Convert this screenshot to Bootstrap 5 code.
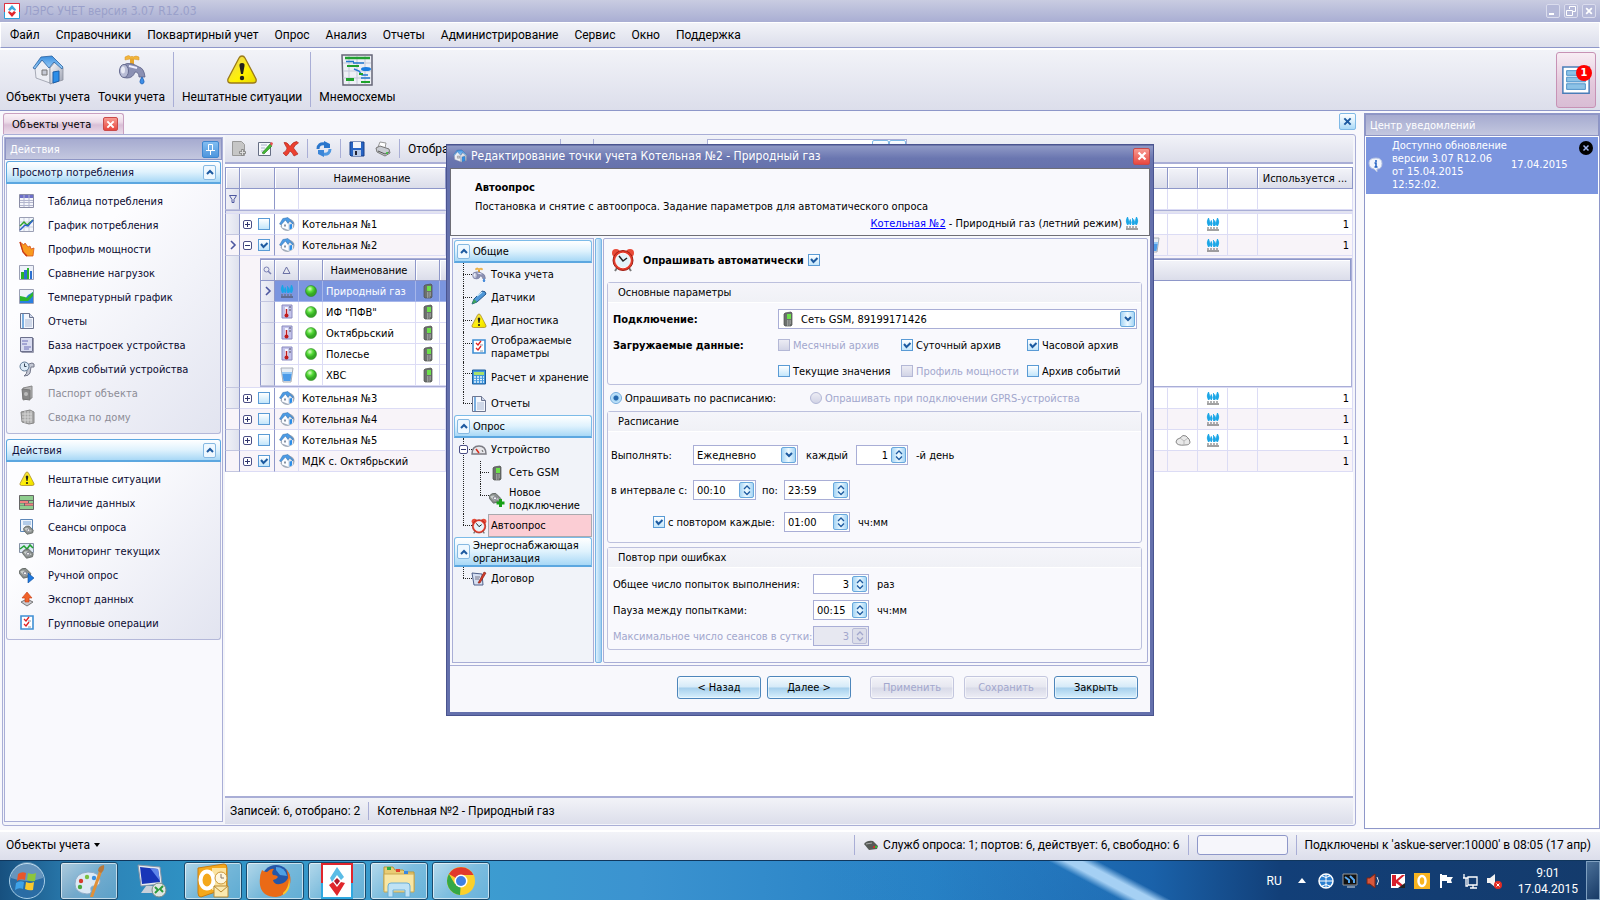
<!DOCTYPE html>
<html lang="ru">
<head>
<meta charset="utf-8">
<meta name="viewport" content="width=device-width, initial-scale=1">
<title>ЛЭРС УЧЕТ версия 3.07 R12.03</title>
<link rel="stylesheet" href="https://cdn.jsdelivr.net/npm/bootstrap@5.3.0/dist/css/bootstrap.min.css">
<script defer src="https://cdn.jsdelivr.net/npm/bootstrap@5.3.0/dist/js/bootstrap.bundle.min.js"></script>
<style>
:root{--ui:Roboto,"Open Sans",sans-serif;--tah:"DejaVu Sans Condensed","DejaVu Sans",sans-serif;--line:#a9aed6;--deep:#8e97c9;--panel:linear-gradient(#f2f3f8,#dcdeeb);--blue:linear-gradient(#fdfeff,#d9effc 50%,#a9d9f7)}
body{font:11px/13px var(--tah);color:#000;background:#f8f8fc;overflow:hidden}
svg{flex:none;display:block}
button,input,select{font:inherit;color:inherit}
button{border:0;background:none;padding:0}
.i16{width:16px;height:16px}.i32{width:32px;height:32px}
.ui{font:12px/16px var(--ui)}
.app-title{height:22px;background:linear-gradient(#c9cce1,#a9aed3);color:#9aa0ca;font-size:12px}
.win-btn{width:14px;height:14px;border:1px solid #dadced;border-radius:2px;background:#b5b9d8;display:flex}
.menu-bar{height:26px;background:var(--panel);border:1px solid #fff;border-bottom:1px solid var(--deep);padding:0 9px;gap:16px}
.menu-bar a{color:#000;text-decoration:none}
.main-tools{height:63px;background:var(--panel);border-top:2px solid #fff;border-bottom:1px solid var(--deep);padding:2px 4px 3px 6px}
.big-btn{display:flex;flex-direction:column;align-items:center;gap:3px}
.vsep{width:1px;align-self:stretch;background:var(--line)}
.note-btn{width:40px;height:56px;border:1px solid #c792b5;border-radius:3px;background:linear-gradient(#f8edf4,#e4c9dc 55%,#d9bdd5);display:flex;position:relative}
.note-count{position:absolute;left:19px;top:12px;width:16px;height:16px;border-radius:50%;background:#f00;color:#fff;font:bold 11px/16px var(--tah);text-align:center}
.workspace{padding-left:2px}
.tab-strip{height:23px;padding-left:1px}
.doc-tab{height:21px;width:121px;border:1px solid #c9a0c0;border-bottom:0;border-radius:3px 3px 0 0;background:linear-gradient(#faf3f8,#ecdbe8 40%,#d9bfd6 55%,#ecdcea);padding:0 5px 0 8px}
.x-red{width:15px;height:14px;border:1px solid #c94a4a;border-radius:2px;background:linear-gradient(#f79a90,#e8473f);display:flex}
.x-red.big{width:17px;height:17px}
.x-blue{width:17px;height:17px;border:1px solid #7fb9e6;border-radius:2px;background:var(--blue);display:flex;color:#1d5aa0}
.doc-frame{border:1px solid var(--line);border-radius:3px;padding:0 2px 1px 1px;background:#f4f5fa}
.side{width:219px;flex:none;border:1px solid var(--line);background:#f9f9fd;margin:2px 0}
.side-groups{display:flex;flex-direction:column;gap:5px;padding:1px}
.pane-title{height:22px;background:linear-gradient(#a6abd0,#c3c7df);border:1px solid #8e95c4;color:#fff;padding:0 2px 0 4px}
.pin{width:17px;height:17px;border:1px solid #3f86cf;border-radius:2px;background:linear-gradient(#82bdf1,#4f96dd);display:flex}
.grp-head{height:23px;border:1px solid #5ca7e0;border-bottom:2px solid #5ca7e0;border-radius:3px 3px 0 0;background:linear-gradient(#fff,#dff2fd 50%,#a8d8f6);padding:0 4px 0 5px;width:100%;color:#10103c}
.fold{width:13px;height:15px;border:1px solid #86b9e2;border-radius:2px;background:#eef8ff;display:flex;flex:none}
.grp-body{border:1px solid #b4b8d9;border-top:0;border-radius:0 0 3px 3px;background:linear-gradient(135deg,#fdfdff 30%,#e2e4f0);padding:5px 12px 4px}
.grp-body a{display:flex;align-items:center;height:24px;gap:13px;color:#0a0a30;text-decoration:none;white-space:nowrap}
.grp-body a.off{color:#8c8c96}
.doc-main{margin-left:2px}
.grid-tools{height:29px;background:var(--panel);border-bottom:2px solid var(--line);padding:0 6px}
.next-tool{margin-left:10px}
.tool-text{width:144px}
.filter-box{width:200px;height:20px;border:1px solid var(--line);background:#fff;margin-left:105px}
.grid-pane{padding-top:3px}
.xgrid{border-collapse:separate;border-spacing:0;table-layout:fixed;width:100%;line-height:13px}
.xgrid th{font-weight:400;text-align:center;background:linear-gradient(#f3f4f9,#dbddea);border:1px solid var(--deep);border-left:0;height:22px;padding:0;box-shadow:inset 1px 1px #fff}
.xgrid tr>:first-child{border-left:1px solid var(--deep)}
.xgrid td{height:21px;padding:0 3px;border-right:1px solid #dcdcf5;border-bottom:1px solid #dcdcf5;white-space:nowrap;overflow:hidden;background:#fff}
.xgrid td svg{margin:0 auto}
.xgrid tr.alt>td{background:#f8f4f9}
.xgrid td.ind{background:linear-gradient(90deg,#f0f1f7,#dfe1ee);border-right:1px solid var(--deep);border-bottom:1px solid #c3c6e0;padding:0}
.xgrid td.dk{border-right-color:var(--deep)}
.xgrid td.strip{height:4px;background:#e2e3f0;border-top:1px solid var(--line)}
.xgrid tr.picked>td:not(.ind,.void){background:#7b95df;color:#fff;border-color:#a6b6ea}
.xgrid td.void{border:0}
.pick{gap:6px}
.pm{width:9px;height:9px;border:1px solid #4b4f86;border-radius:2px;background:#fff;position:relative;flex:none}
.pm::before,.pm.plus::after{content:"";position:absolute;background:#30346c}
.pm::before{left:1px;right:1px;top:3px;height:1px}
.pm.plus::after{top:1px;bottom:1px;left:3px;width:1px}
.xgrid td.nest{padding:2px 0 0 20px;background:#f8f4f9}
.nest-wrap{border:1px solid var(--line);border-left:0;background:#fff}
.doc-status{height:28px;background:var(--panel);border-top:2px solid var(--line);font:12px/16px var(--ui);padding:0 5px}
.alerts{width:236px;flex:none;border:1px solid var(--deep);background:#fff;margin:2px 0 1px}
.alert-row{background:#7b95df;color:#fff;height:57px;margin:1px;padding:0 5px 2px 2px}
.alert-row p{width:111px;margin:0;white-space:nowrap}
.status{height:30px;background:var(--panel);border-top:2px solid #fff;padding:3px 9px 5px 6px}
.progress-slot{width:91px;height:20px;border:1px solid var(--deep);border-radius:3px;background:#f6f6fb}
/* dialog */
.stage{position:absolute;inset:0;display:flex;align-items:center;justify-content:center;pointer-events:none}
.dlg{pointer-events:auto;width:708px;background:#f8f8fc;border:4px solid #6470ac;border-top:0;outline:1px solid #4a548f;outline-offset:-1px}
.dlg-title{height:24px;margin:0 -4px;padding:0 4px 0 7px;background:linear-gradient(#4a548f 1px,#8f99c6 2px,#6a76b0 60%,#6672ac);color:#fff;font-size:12px}
.dlg-head{height:68px;border:1px solid #6e6e76;background:#f9f9fd;padding:12px 9px 0 24px}
.dlg-note{margin:6px 0 2px}
.dlg-link{display:flex;justify-content:flex-end;align-items:center;gap:2px}
.dlg-link a{color:#00f}
.dlg-body{display:flex;height:430px;padding:2px;border-bottom:1px solid var(--line)}
.dlg-foot{height:46px;padding:0 12px 4px 0}
.tree{width:142px;flex:none;border:1px solid var(--line);background:#f1f3f9;padding:1px}
.tree-head{min-height:23px;width:100%;display:flex;align-items:center;gap:3px;text-align:left;border:1px solid #7cbbe8;border-bottom:2px solid #5ca7e0;border-radius:3px 3px 0 0;background:linear-gradient(#fff,#dff2fd 50%,#a8d8f6);padding:0 3px 0 2px;line-height:13px}
.tree ul{list-style:none;margin:0;padding:0 0 0 17px}
.tree li{position:relative}
.tree li>.nd{display:flex;align-items:center;min-height:23px;gap:4px}
.tree li>.nd.tall,.tree-head.tall{min-height:30px}
.tree li::before{content:"";position:absolute;left:-8px;top:0;bottom:0;border-left:1px dotted #222}
.tree li::after{content:"";position:absolute;left:-8px;width:9px;top:11px;border-top:1px dotted #222}
.tree li:last-child::before{bottom:auto;height:11px}
.tree li li::after,.tree li li::before{left:-9px}
.tree ul ul{padding-left:18px}
.tree .cur{flex:1;background:#fbcdd4;border:1px solid #a9a9ae;height:23px;display:flex;align-items:center;margin-left:-3px;padding-left:2px}
.tree .box-pm{position:absolute;left:-12px;top:7px;z-index:1}
.split{width:7px;border:1px solid #79b5e4;border-radius:2px;background:linear-gradient(90deg,#dff1fd,#9dcdf0);margin:0 1px}
.work{border:1px solid var(--line);border-radius:2px;padding:3px 5px 0 3px}
.auto-row{height:36px;margin-bottom:4px}
.mode-row{height:18px;margin-bottom:4px;padding-left:3px}
.fs{border:1px solid #bcc0dd;border-radius:3px;margin:0 0 4px;background:#f9f9fd}
.fs h3{font:11px/20px var(--tah);height:20px;margin:0 0 3px;padding-left:10px;background:linear-gradient(#f5f5fa,#f0f1f6);border-bottom:1px solid #fff}
.fs.plan h3{margin-bottom:1px}
.fs>div{display:flex;align-items:center;height:26px;padding-left:5px}
.fs.three{height:103px}
.fs.plan{height:132px}
.fs.plan>div{padding-left:3px}
.fs.plan>.first{height:44px}
.fs.plan>.last{height:38px;padding-left:45px}
.w-cap{width:82px;flex:none}.w-long{width:200px;flex:none}.w-key{width:165px;flex:none}.w-o1{width:123px}.w-o2{width:126px}.w-per{width:105px}.w-s{width:56px}.w-m{width:66px}.w-rep{width:131px}
.chk{appearance:none;width:12px;height:12px;margin:0;flex:none;border:1px solid #5a9bd5;background:linear-gradient(#fff,#c3e6fb)}
.chk:checked{background:url("data:image/svg+xml,%3Csvg xmlns='http://www.w3.org/2000/svg' viewBox='0 0 10 10'%3E%3Cpath d='M2 4l2.5 3L8.500 3' fill='none' stroke='%231d5aa0' stroke-width='2'/%3E%3C/svg%3E"),linear-gradient(#fff,#c3e6fb)}
.chk:disabled{border-color:#b4b8d6;background:linear-gradient(#ececf4,#d2d4e6)}
.rad{border-radius:50%;border-color:#6fa9dc}
.rad:checked{background:radial-gradient(circle,#2467ad 0 2px,#a8d6f5 3px,#eef8ff)}
label.opt{display:flex;align-items:center;gap:3px;flex:none;white-space:nowrap}
label.opt.off,.dis{color:#a2a7cd}
.spin,.combo{display:flex;align-items:center;height:20px;border:1px solid var(--line);background:#fff;padding:1px}
.spin input{flex:1;min-width:0;width:20px;border:0;padding:0 3px 0 2px;background:none;outline:0}
.spin button,.combo .dd{width:15px;height:16px;border:1px solid #69a8dc;border-radius:2px;background:linear-gradient(90deg,#a6d5f5,#eefaff 50%,#a6d5f5);display:flex;flex:none;color:#1d5aa0}
.spin svg,.dd svg,.x-red svg,.x-blue svg,.fold svg,.pin svg,.win-btn svg{margin:auto}
.combo select{appearance:none;border:0;background:none;flex:1;min-width:0;padding:0 2px;outline:0}
.combo svg+select{padding-left:5px}
.combo .dd{pointer-events:none}
.spin.dis{background:#e7e8f1}
.spin.dis button{background:#dcdeea;border-color:#b9bcd8;color:#a2a7cd}
.dbtn{width:84px;height:23px;border:1px solid #4d86bb;border-radius:3px;background:linear-gradient(#f4fafe,#d5eaf8 48%,#a5cfec 52%,#d8f0fd);box-shadow:inset 0 0 0 1px #ffffff80}
.dbtn:disabled{border-color:#c3c6de;background:linear-gradient(#f3f3f8,#e6e7f0 48%,#d8dae8 52%,#ededf5);color:#a2a7cd}
/* taskbar */
.taskbar{height:40px;border-top:1px solid #10365c;background:linear-gradient(28deg,#0000 50%,#2f8ad040 67%,#a5d0f4 68%,#a5d0f4 69%,#0000 70%),linear-gradient(90deg,#17507f 0,#2c80b4 5%,#2f92c4 12%,#3d9ed0 28%,#3b93d0 40%,#2680c4 58%,#1a62aa 72%,#123f78 80%,#143b6c);color:#fff;font:12px/16px var(--ui)}
.tb{width:58px;height:38px;display:flex;border-radius:3px;border:1px solid #1a4a6c;box-shadow:inset 0 0 0 1px #ffffff99;background:linear-gradient(135deg,#ffffffa0,#ffffff55 50%,#ffffff38)}
.tb svg,.tb-rdp svg{margin:auto}
.tb-rdp{width:66px}
.start{width:60px;padding-left:8px}
.show-desk{width:14px;border:1px solid #7fa0c0;background:linear-gradient(135deg,#4b7098,#173a66)}
</style>
</head>
<body class="d-flex flex-column min-vh-100">
<svg width="0" height="0" class="position-absolute" aria-hidden="true">
<defs>
<linearGradient id="gs" x1="0" y1="0" x2="1" y2="1"><stop offset="0" stop-color="#fdfdff"/><stop offset="1" stop-color="#9a9fb0"/></linearGradient>
<linearGradient id="gy" x1="0" y1="0" x2="1" y2="1"><stop offset="0" stop-color="#e8cf70"/><stop offset=".6" stop-color="#fff200"/><stop offset="1" stop-color="#e8d800"/></linearGradient>
<linearGradient id="gb" x1="0" y1="0" x2="0" y2="1"><stop offset="0" stop-color="#3a8fe0"/><stop offset="1" stop-color="#9fd0f8"/></linearGradient>
<radialGradient id="gg" cx=".4" cy=".3"><stop offset="0" stop-color="#e0ffc8"/><stop offset=".55" stop-color="#55dc38"/><stop offset="1" stop-color="#35a824"/></radialGradient>
<symbol id="house" viewBox="0 0 32 32"><path d="M3 14l8-9 7 8v16l-14-5z" fill="#eceef4" stroke="#9599a6" stroke-width=".8"/><path d="M18 14l5-6 8 6v12l-13 4z" fill="url(#gs)" stroke="#8b8f9c" stroke-width=".8"/><path d="M1 14L9 3l11-1 11 11-1 2-8-7-5 6-7-8-7 9z" fill="url(#gb)" stroke="#27609f" stroke-width=".8"/><path d="M21 18l6-1v10l-6 2z" fill="#2c8ee8" stroke="#1a5faa"/><path d="M10 16h5v5h-5z" fill="#c5c9d4" stroke="#777"/></symbol>
<symbol id="sm-house" viewBox="0 0 16 16"><path d="M10 2.500q5.500 1.500 5.500 6T9 15Q4 15 1.500 10.500L3 6z" fill="#a3acba"/><path d="M3 7.500L6.500 4l3 3.500V14L3 11.500z" fill="#fbfcff"/><path d="M9 7l2-2.500 3 3.500v4.500L9 14z" fill="#dfe4ec"/><path d="M.5 8l3.300-5.500L9 1.500 14.500 7l-.8 1-3-3L9 7.500 6.500 4 2 8.800z" fill="#4c9be4" stroke="#27609f" stroke-width=".4"/><path d="M10.500 8.500l2.500-.5v4.500l-2.500 1z" fill="#2c8ee8"/><path d="M5 8.500h2v2H5z" fill="#8a94a4"/></symbol>
<symbol id="tap" viewBox="0 0 32 32"><path d="M9 3q4-3 6 0 1-2 2 0 3-2 6 0v3l-6-1h-3l-5 1z" fill="#f2b53c" stroke="#d6942a" stroke-width=".5"/><path d="M14 5h4v6h-4z" fill="#e7a62c"/><path d="M5 12q6-4 12-2l6 3q5 1 6 10h-6q0-5-4-5-2 6-8 6-6 0-7-6z" fill="#8b90b3" stroke="#5a5f85" stroke-width=".8"/><ellipse cx="8" cy="17" rx="4.500" ry="6.500" fill="#b9bdd6" stroke="#666b90"/><ellipse cx="7" cy="16" rx="2" ry="3.500" fill="#e9ebf6"/><path d="M13 12l8 2" stroke="#eef" stroke-width="2"/><path d="M26 23q-4 6 0 7 4-1 0-7" fill="#3e8fe8" stroke="#2a6dc0"/></symbol>
<symbol id="warn" viewBox="0 0 32 32"><path d="M16 2q2 0 3 2l11 21q1 4-3 4H5q-4 0-3-4L13 4q1-2 3-2z" fill="url(#gy)" stroke="#9a7a18" stroke-width="1.300"/><path d="M16 9q3 0 2.500 3L17 20h-2l-1.500-8Q13 9 16 9z" fill="#20201c"/><circle cx="16" cy="24" r="2.200" fill="#20201c"/></symbol>
<symbol id="mnemo" viewBox="0 0 32 32"><path d="M1 1h30v30H2z" fill="#eef0f6" stroke="#667" stroke-width="1.500"/><path d="M8 2v28M16 2v28M24 2v28M2 9h28M2 17h28M2 24h28" stroke="#c3c8d8"/><path d="M4 4h25" stroke="#20a030" stroke-width="2.500"/><path d="M5 7.500h8M12 9h11" stroke="#2478d0" stroke-width="1.500"/><path d="M6 12h12" stroke="#20a030" stroke-width="2"/><path d="M13 15l5 2 3 4h6" stroke="#2478d0" stroke-width="1.500" fill="none"/><ellipse cx="25" cy="15" rx="5" ry="2" fill="#1b7de0"/><path d="M5 24h8v3H5zM18 19h4v2h-4zM20 27h9v2h-9z" fill="#1ea32c"/><path d="M20 24h9" stroke="#2478d0" stroke-width="1.500"/></symbol>
<symbol id="news" viewBox="0 0 32 32"><path d="M2 2h28v28H2z" fill="#fff" stroke="#4a7db8" stroke-width="1.600"/><path d="M6 6h20v5H6zM6 13h20v5H6zM6 20h20v6H6z" fill="#8cc2e6" stroke="#4a8fc8"/></symbol>
<symbol id="lers" viewBox="0 0 16 16"><path d="M.5.5h15v15H.5z" fill="#fff" stroke="#2a9fd8"/><path d="M.5 9V.5h15V9" fill="none" stroke="#e03040"/><path d="M8 2l4 4.500-1 1.500-3-2-2 2-2-1.500z" fill="#3cabe0"/><path d="M8 14L4 9.500 5 8l3 2 2-2 2 1.500z" fill="#e0272b"/></symbol>
<symbol id="table" viewBox="0 0 16 16"><path d="M.5 1.500h14v13H.5z" fill="#f4f5fa" stroke="#8a8da6"/><path d="M1 2h13v3H1z" fill="#6d6fc8"/><path d="M1 7.500h13M1 9.500h13M1 12.500h13M5 2v12M10 2v12" stroke="#b3b6ce"/></symbol>
<symbol id="chart" viewBox="0 0 16 16"><path d="M.5.5h14v14H.5z" fill="#f3f6fb" stroke="#9a9fb4"/><path d="M5 1v13M10 1v13M1 5h13M1 10h13" stroke="#c9cede"/><path d="M1 9l4-4 3 3 6-5" fill="none" stroke="#2fa32a" stroke-width="1.500"/><path d="M1 13l5-5 3 1 5-6" fill="none" stroke="#2b5fc9" stroke-width="1.500"/></symbol>
<symbol id="power" viewBox="0 0 16 16"><path d="M1 1l4 3 1-2 3 4 2-1 1 3 3-1-1 8H7L4 11z" fill="#f99a1e" stroke="#d8561a" stroke-width=".8"/><path d="M1 1l3 10 4 4" stroke="#c83a18" fill="none" stroke-width="1.300"/></symbol>
<symbol id="bars" viewBox="0 0 16 16"><path d="M.5.5h14v14H.5z" fill="#eef2fa" stroke="#9a9fb4"/><path d="M2 7h3v7H2zM8 3h2v11H8z" fill="#28b428"/><path d="M5 5h3v9H5zM11 6h2v8h-2z" fill="#2b6fd0"/></symbol>
<symbol id="temp" viewBox="0 0 16 16"><path d="M.5.5h14v14H.5z" fill="#eef2fa" stroke="#9a9fb4"/><path d="M1 9l4 2 4-5 5-3v11H1z" fill="#2b7fe0"/><path d="M1 7l5 1 2 1 6-6v4l-5 5H1z" fill="#2cb52c"/></symbol>
<symbol id="report" viewBox="0 0 16 16"><path d="M1.500.5h9l4 4v11h-13z" fill="#f3f6fc" stroke="#6c7590"/><path d="M10.500.5v4h4" fill="#cdd6ea" stroke="#6c7590"/><path d="M4 1v14" stroke="#7aaee0" stroke-width="2"/><path d="M6 7h7M6 9h7M6 11h7M6 13h7" stroke="#a9b8d4"/></symbol>
<symbol id="base" viewBox="0 0 16 16"><path d="M1.500.5h12v14h-12z" fill="#d9dcf0" stroke="#6c708c"/><path d="M3 4h6M3 7h5M5 10h7M5 12h5" stroke="#6d6fb8"/><path d="M14.500 1v14.500h-12" stroke="#9a9cae" fill="none"/></symbol>
<symbol id="archive" viewBox="0 0 16 16"><path d="M7 4l6-2q3 0 2 4h-3l-1 6q-1 3-6 3 3-2 3-5z" fill="#c4c8d4" stroke="#74788a"/><circle cx="5.500" cy="5.500" r="4.500" fill="#dbeaf6" stroke="#5d7893"/><path d="M5.500 2.500v3h2" stroke="#345" fill="none"/></symbol>
<symbol id="passport" viewBox="0 0 16 16"><path d="M4 3l9-2v12l-9 2z" fill="#b5b5b5" stroke="#888"/><path d="M3 4l8 1v10l-7-1z" fill="#888" stroke="#777"/><circle cx="7" cy="9" r="2" fill="#bbb"/></symbol>
<symbol id="homes" viewBox="0 0 16 16"><path d="M2 3l9-2 4 2v11l-5 1-7-2z" fill="#a6a6a6" stroke="#888"/><path d="M3 5h10M3 8h10M3 11h10M6 2v12M9 2v12M12 2v12" stroke="#d5d5d5"/></symbol>
<symbol id="avail" viewBox="0 0 16 16"><path d="M.5.5h14v14H.5z" fill="#666" stroke="#666"/><path d="M1 1h13v4H1zM1 11h13v3H1z" fill="#8fce8f"/><path d="M1 6h8v2H1zM6 8.500h8v2H6z" fill="#f08080"/><path d="M10 6h4v2h-4zM1 8.500h4v2H1z" fill="#8fce8f"/></symbol>
<symbol id="phone" viewBox="0 0 16 16"><path d="M1 6q3-4 8-3l6 6-1 4-8 2-5-6z" fill="#8b908e" stroke="#555b58"/><path d="M2 7q4-3 7 0l4 3-6 2z" fill="#c8cdca"/><circle cx="8" cy="9" r="2" fill="#f2f4f2" stroke="#667"/></symbol>
<symbol id="sess" viewBox="0 0 16 16"><path d="M1.500.5h12v12h-12z" fill="#eef4fc" stroke="#5d87b9"/><path d="M4 3h8M4 5h8" stroke="#79a4d6"/><use href="#phone" x="3" y="5" width="13" height="11"/></symbol>
<symbol id="mon" viewBox="0 0 16 16"><path d="M.5.5h14v9H.5z" fill="#dce8f5" stroke="#8490a4"/><path d="M1 6l4-3 3 3 3-4 3 3" stroke="#20a030" fill="none" stroke-width="1.500"/><use href="#phone" x="2" y="4" width="14" height="12"/></symbol>
<symbol id="play" viewBox="0 0 16 16"><use href="#phone" x="-1" y="-1" width="14" height="13"/><path d="M9 6l6 5-6 5z" fill="#1c78e0" stroke="#0f4b98" stroke-width=".6"/></symbol>
<symbol id="export" viewBox="0 0 16 16"><path d="M2 11l6-3 6 3-6 4z" fill="#c9c9cf" stroke="#777"/><path d="M8 1l5 6H10v4H6V7H3z" fill="#f0622a" stroke="#c43c14" stroke-width=".6"/></symbol>
<symbol id="ops" viewBox="0 0 16 16"><path d="M2 1h12v13H2z" fill="#fff" stroke="#3f8fd4" stroke-width="1.600"/><path d="M5 4l2 2 3-4M5 9l2 2 3-4" stroke="#e02020" fill="none" stroke-width="1.300"/><path d="M9 6h3M9 12h3" stroke="#89a"/></symbol>
<symbol id="addoc" viewBox="0 0 16 16"><path d="M1.500.5h9l3 3v11h-12z" fill="#c6c6c6" stroke="#999"/><path d="M11.500 8v7M8 11.500h7" stroke="#888" stroke-width="2.500"/><path d="M11.500 9v5M9 11.500h5" stroke="#ddd"/></symbol>
<symbol id="edit" viewBox="0 0 16 16"><path d="M1.500 1.500h12v13h-12z" fill="#f6f8fc" stroke="#666e84"/><path d="M4 4h6M4 7h4M4 10h3" stroke="#a9b4cc"/><path d="M5 12l8-9 2 2-8 8z" fill="#42b833" stroke="#237a1a" stroke-width=".6"/><path d="M13 3l1-2 2 1-1 3z" fill="#e85050"/></symbol>
<symbol id="del" viewBox="0 0 16 16"><path d="M1 1.500q3-1 6 4 3-5 7-5l1.500 1.500q-4 2-5 5 3 4 4.500 6l-4 2q-2-4-4-5-2 4-4 5l-3-3q4-2 4-5-2-3-3-5.500z" fill="#ec4030" stroke="#a81c12" stroke-width=".6"/></symbol>
<symbol id="refresh" viewBox="0 0 16 16"><path d="M2 8q0-6 7-5" fill="none" stroke="#2a76cc" stroke-width="3"/><path d="M8 0l6 3v4H8z" fill="#2a76cc"/><path d="M14 8q0 6-7 5" fill="none" stroke="#4e98e2" stroke-width="3"/><path d="M8 16l-6-3V9h6z" fill="#3c86d8"/></symbol>
<symbol id="save" viewBox="0 0 16 16"><path d="M1 1h14v14H2l-1-1z" fill="#2764c4" stroke="#183f88"/><path d="M4 1h8v6H4z" fill="#f3f5fa"/><path d="M4 9h8v6H4z" fill="#b6c9e8"/><path d="M6 10h2v4H6z" fill="#223"/></symbol>
<symbol id="print" viewBox="0 0 16 16"><path d="M3 6l2-5 6 1-1 5z" fill="#fff" stroke="#999"/><path d="M1 7l4-2 9 3 1 4-5 3-8-4z" fill="#c9ccd2" stroke="#777"/><path d="M3 10l7 3 4-2" stroke="#555" fill="none"/><circle cx="12" cy="12" r="1" fill="#3c3"/></symbol>
<symbol id="gas" viewBox="0 0 16 16"><path d="M3.500 2q-2.500 4 0 8 2.500-1 1-4.500zM6.300 4.500q-1.800 3 0 5.500 1.800-2 0-5.500zM8.500 3v7M9.700 4.500q-1.800 3 0 5.500 1.800-2 0-5.500zM12.500 2q2.500 4 0 8-2.500-1-1-4.500z" fill="#1ba6e6" stroke="#1ba6e6" stroke-width=".9"/><path d="M2 12h12" stroke="#666" stroke-dasharray="2 1"/><path d="M2 14h12" stroke="#444"/></symbol>
<symbol id="ball" viewBox="0 0 16 16"><circle cx="8" cy="8" r="5.500" fill="url(#gg)" stroke="#237a1a" stroke-width=".5"/></symbol>
<symbol id="heat" viewBox="0 0 16 16"><path d="M3 1h10v13H3z" fill="#c3c3ea" stroke="#8a8ac0"/><path d="M7.500 3v8" stroke="#f5f5ff" stroke-width="3"/><path d="M7.500 5v6" stroke="#c01c1c" stroke-width="1.500"/><circle cx="7.500" cy="11.500" r="2" fill="#c01c1c"/><path d="M10 3h2M10 6h2" stroke="#556"/></symbol>
<symbol id="water" viewBox="0 0 16 16"><path d="M2 1h12l-2 14H4z" fill="#e9eef4" stroke="#a9aeb8"/><path d="M3 5h10l-1.500 9h-7z" fill="#4d9be8"/><path d="M3 5h10v2H3z" fill="#95c8f4"/></symbol>
<symbol id="stone" viewBox="0 0 16 16"><path d="M1 10q0-3 4-4 3-4 6-2 4 3 4 6 0 3-5 3-8 1-9-3z" fill="#e9e9e9" stroke="#888"/><path d="M5 6l4 3 4-3M9 9v4" stroke="#bbb" fill="none"/></symbol>
<symbol id="cell" viewBox="0 0 16 16"><path d="M5 2l6-1 1 1v12l-1 1H5L4 14V3z" fill="#6c706e" stroke="#4b4e4c" stroke-width=".7"/><path d="M7 3h4v5H7z" fill="#6de04a"/><path d="M7 10h4M7 12h4M7 14h3" stroke="#c8ccc9" stroke-dasharray="1 .6"/></symbol>
<symbol id="clock" viewBox="0 0 24 24"><path d="M6 20l-2 3M18 20l2 3" stroke="#777" stroke-width="2"/><circle cx="5" cy="5" r="4" fill="#e84a38"/><circle cx="19" cy="5" r="4" fill="#e84a38"/><circle cx="12" cy="12.500" r="10" fill="#e23b2b" stroke="#a02015"/><circle cx="12" cy="12.500" r="7.300" fill="#e4f4fb" stroke="#fff"/><path d="M8 8l4 5 4-3" stroke="#222" fill="none" stroke-width="1.500"/></symbol>
<symbol id="sensor" viewBox="0 0 16 16"><path d="M1 14l2-5 8-8q4 0 4 3l-9 8z" fill="#4e97d8" stroke="#27588c"/><path d="M6 6l5-4" stroke="#cfe8fb" stroke-width="1.500"/><path d="M1 14l2-5 3 3z" fill="#3da45a"/></symbol>
<symbol id="calc" viewBox="0 0 16 16"><path d="M1.500 1h13v14h-13z" fill="#3f96dc" stroke="#1f5f9f"/><path d="M3 3h10v3H3z" fill="#a9e06a"/><path d="M3 8h10M3 10.500h10M3 13h10" stroke="#e9f5fd" stroke-width="1.500" stroke-dasharray="2 1"/></symbol>
<symbol id="gauge" viewBox="0 0 16 16"><path d="M1 12q0-8 7-8t7 8z" fill="#e6e6ea" stroke="#7c7c84" stroke-width="1.500"/><path d="M8 11L5 7" stroke="#d82c1c" stroke-width="1.500"/><path d="M11 8l1 2" stroke="#666"/></symbol>
<symbol id="newcon" viewBox="0 0 16 16"><use href="#phone" x="-1" y="0" width="14" height="13"/><path d="M11.500 8v8M7.500 12h8" stroke="#17a017" stroke-width="3"/></symbol>
<symbol id="contract" viewBox="0 0 16 16"><path d="M1 2l10 1 1 11H3z" fill="#d6dff2" stroke="#4e5f8a"/><path d="M4 6h5M4 8h4" stroke="#778"/><path d="M7 12l6-11 2 1-6 10z" fill="#d43a28" stroke="#7c1b10" stroke-width=".6"/></symbol>
<symbol id="x" viewBox="0 0 10 10"><path d="M1.500 1.500l7 7M8.500 1.500l-7 7" stroke="currentColor" stroke-width="2.200"/></symbol>
<symbol id="up" viewBox="0 0 10 10"><path d="M2 7l3-3 3 3" fill="none" stroke="#1d5aa0" stroke-width="2"/></symbol>
<symbol id="down" viewBox="0 0 10 10"><path d="M2 3l3 3 3-3" fill="none" stroke="#1d5aa0" stroke-width="2"/></symbol>
<symbol id="ud" viewBox="0 0 10 12"><path d="M2 5l3-3 3 3M2 7.500l3 3 3-3" fill="none" stroke="currentColor" stroke-width="1.300"/></symbol>
<symbol id="chev" viewBox="0 0 10 10"><path d="M3 1l4 4-4 4" fill="none" stroke="#4d57a0" stroke-width="1.600"/></symbol>
</defs>
</svg>

<div class="position-relative d-flex flex-column flex-grow-1">
<header>
  <div class="app-title d-flex align-items-center ps-1">
    <svg class="i16"><use href="#lers"/></svg><span class="flex-grow-1 ps-1">ЛЭРС УЧЕТ версия 3.07 R12.03</span>
    <div class="d-flex gap-1 pe-1">
      <button class="win-btn" aria-label="Свернуть"><svg width="10" height="10"><path d="M1 8h5" stroke="#fff" stroke-width="2"/></svg></button>
      <button class="win-btn" aria-label="Восстановить"><svg width="10" height="10" fill="none" stroke="#fff"><path d="M3.500 3V.5h6v5H7M.5 4.500h6v5h-6z"/></svg></button>
      <button class="win-btn text-white" aria-label="Закрыть окно"><svg width="8" height="8"><use href="#x"/></svg></button>
    </div>
  </div>
  <nav class="menu-bar ui d-flex align-items-center" aria-label="Меню">
    <a href="#">Файл</a><a href="#">Справочники</a><a href="#">Поквартирный учет</a><a href="#">Опрос</a><a href="#">Анализ</a><a href="#">Отчеты</a><a href="#">Администрирование</a><a href="#">Сервис</a><a href="#">Окно</a><a href="#">Поддержка</a>
  </nav>
  <div class="main-tools ui d-flex align-items-center">
    <button class="big-btn"><svg class="i32"><use href="#house"/></svg>Объекты учета</button>
    <button class="big-btn ms-2"><svg class="i32"><use href="#tap"/></svg>Точки учета</button>
    <span class="vsep mx-2"></span>
    <button class="big-btn"><svg class="i32"><use href="#warn"/></svg>Нештатные ситуации</button>
    <span class="vsep mx-2"></span>
    <button class="big-btn"><svg class="i32"><use href="#mnemo"/></svg>Мнемосхемы</button>
    <button class="note-btn ms-auto" aria-label="Уведомления"><svg class="m-auto" width="30" height="30"><use href="#news"/></svg><span class="note-count">1</span></button>
  </div>
</header>

<div class="workspace d-flex flex-grow-1 gap-2">
  <section class="d-flex flex-column flex-grow-1 mb-1">
    <div class="tab-strip d-flex align-items-end justify-content-between">
      <div class="doc-tab d-flex align-items-center justify-content-between">Объекты учета<button class="x-red text-white" aria-label="Закрыть вкладку"><svg width="9" height="9"><use href="#x"/></svg></button></div>
      <button class="x-blue mb-1" aria-label="Закрыть"><svg width="9" height="9"><use href="#x"/></svg></button>
    </div>
    <div class="doc-frame d-flex flex-grow-1">
      <aside class="side">
        <div class="pane-title d-flex align-items-center justify-content-between">Действия<button class="pin" aria-label="Закрепить"><svg width="11" height="11" fill="none" stroke="#fff"><path d="M3.500 6V.5h4V6M1 6.500h9M5.500 7v4"/></svg></button></div>
        <div class="side-groups">
        <div>
          <button class="grp-head d-flex align-items-center justify-content-between">Просмотр потребления<span class="fold"><svg width="10" height="10"><use href="#up"/></svg></span></button>
          <div class="grp-body">
            <a href="#"><svg class="i16"><use href="#table"/></svg>Таблица потребления</a>
            <a href="#"><svg class="i16"><use href="#chart"/></svg>График потребления</a>
            <a href="#"><svg class="i16"><use href="#power"/></svg>Профиль мощности</a>
            <a href="#"><svg class="i16"><use href="#bars"/></svg>Сравнение нагрузок</a>
            <a href="#"><svg class="i16"><use href="#temp"/></svg>Температурный график</a>
            <a href="#"><svg class="i16"><use href="#report"/></svg>Отчеты</a>
            <a href="#"><svg class="i16"><use href="#base"/></svg>База настроек устройства</a>
            <a href="#"><svg class="i16"><use href="#archive"/></svg>Архив событий устройства</a>
            <a href="#" class="off"><svg class="i16"><use href="#passport"/></svg>Паспорт объекта</a>
            <a href="#" class="off"><svg class="i16"><use href="#homes"/></svg>Сводка по дому</a>
          </div>
        </div>
        <div>
          <button class="grp-head d-flex align-items-center justify-content-between">Действия<span class="fold"><svg width="10" height="10"><use href="#up"/></svg></span></button>
          <div class="grp-body">
            <a href="#"><svg class="i16"><use href="#warn"/></svg>Нештатные ситуации</a>
            <a href="#"><svg class="i16"><use href="#avail"/></svg>Наличие данных</a>
            <a href="#"><svg class="i16"><use href="#sess"/></svg>Сеансы опроса</a>
            <a href="#"><svg class="i16"><use href="#mon"/></svg>Мониторинг текущих</a>
            <a href="#"><svg class="i16"><use href="#play"/></svg>Ручной опрос</a>
            <a href="#"><svg class="i16"><use href="#export"/></svg>Экспорт данных</a>
            <a href="#"><svg class="i16"><use href="#ops"/></svg>Групповые операции</a>
          </div>
        </div>
        </div>
      </aside>
      <main class="doc-main d-flex flex-column flex-grow-1 bg-white">
        <div class="grid-tools ui d-flex align-items-center">
          <button aria-label="Добавить"><svg class="i16"><use href="#addoc"/></svg></button>
          <button class="next-tool" aria-label="Изменить"><svg class="i16"><use href="#edit"/></svg></button>
          <button class="next-tool" aria-label="Удалить"><svg class="i16"><use href="#del"/></svg></button>
          <span class="vsep mx-2 my-1"></span>
          <button aria-label="Обновить"><svg class="i16"><use href="#refresh"/></svg></button>
          <span class="vsep mx-2 my-1"></span>
          <button aria-label="Сохранить список"><svg class="i16"><use href="#save"/></svg></button>
          <button class="next-tool" aria-label="Печать"><svg class="i16"><use href="#print"/></svg></button>
          <span class="vsep mx-2 my-1"></span>
          <span class="tool-text">Отображать</span>
          <span class="vsep mx-2 my-1"></span>
          <svg class="i16"><use href="#gauge"/></svg>
          <span class="vsep mx-2 my-1"></span>
          <div class="filter-box d-flex justify-content-end"><span class="x-blue"></span><span class="x-blue"></span></div>
        </div>
        <div class="grid-pane flex-grow-1">
          <table class="xgrid">
            <colgroup><col style="width:15px"><col style="width:35px"><col style="width:24px"><col style="width:147px"><col><col style="width:30px"><col style="width:30px"><col style="width:30px"><col style="width:30px"><col style="width:95px"></colgroup>
            <thead>
              <tr><th></th><th></th><th></th><th>Наименование</th><th></th><th></th><th></th><th></th><th></th><th>Используется ...</th></tr>
            </thead>
            <tbody>
              <tr><td class="ind"><svg width="10" height="10" fill="none" stroke="#4d57a0"><path d="M1.500 1.500h7L6 5.500v3H4v-3z"/></svg></td><td class="dk"></td><td></td><td></td><td></td><td></td><td></td><td></td><td></td><td></td></tr>
              <tr><td colspan="10" class="strip"></td></tr>
              <tr><td class="ind"></td><td class="dk"><div class="pick d-flex align-items-center"><span class="pm plus"></span><input class="chk" type="checkbox" aria-label="Котельная №1"></div></td><td><svg class="i16"><use href="#sm-house"/></svg></td><td>Котельная №1</td><td></td><td></td><td></td><td><svg class="i16"><use href="#gas"/></svg></td><td></td><td class="text-end">1</td></tr>
              <tr class="alt"><td class="ind"><svg width="10" height="10"><use href="#chev"/></svg></td><td class="dk"><div class="pick d-flex align-items-center"><span class="pm"></span><input class="chk" type="checkbox" checked aria-label="Котельная №2"></div></td><td><svg class="i16"><use href="#sm-house"/></svg></td><td>Котельная №2</td><td></td><td><svg class="i16"><use href="#water"/></svg></td><td></td><td><svg class="i16"><use href="#gas"/></svg></td><td></td><td class="text-end">1</td></tr>
              <tr><td class="ind"></td><td colspan="9" class="nest"><div class="nest-wrap">
                <table class="xgrid">
                  <colgroup><col style="width:15px"><col style="width:24px"><col style="width:24px"><col style="width:93px"><col style="width:24px"><col style="width:200px"><col></colgroup>
                  <thead><tr><th><svg class="m-auto" width="9" height="9" fill="none" stroke="#7a80b4"><circle cx="3.500" cy="3.500" r="2.500"/><path d="M5 5l3 3" stroke-width="1.500"/></svg></th><th><svg class="m-auto" width="9" height="9" fill="none" stroke="#6a70a4"><path d="M1 7.500h7L4.500 1z"/></svg></th><th></th><th>Наименование</th><th></th><th></th><th></th></tr></thead>
                  <tbody>
                  <tr class="picked"><td class="ind"><svg width="10" height="10"><use href="#chev"/></svg></td><td><svg class="i16"><use href="#gas"/></svg></td><td><svg class="i16"><use href="#ball"/></svg></td><td>Природный газ</td><td><svg class="i16"><use href="#cell"/></svg></td><td></td><td class="void"></td></tr>
                  <tr><td class="ind"></td><td><svg class="i16"><use href="#heat"/></svg></td><td><svg class="i16"><use href="#ball"/></svg></td><td>ИФ "ПФВ"</td><td><svg class="i16"><use href="#cell"/></svg></td><td></td><td class="void"></td></tr>
                  <tr><td class="ind"></td><td><svg class="i16"><use href="#heat"/></svg></td><td><svg class="i16"><use href="#ball"/></svg></td><td>Октябрьский</td><td><svg class="i16"><use href="#cell"/></svg></td><td></td><td class="void"></td></tr>
                  <tr><td class="ind"></td><td><svg class="i16"><use href="#heat"/></svg></td><td><svg class="i16"><use href="#ball"/></svg></td><td>Полесье</td><td><svg class="i16"><use href="#cell"/></svg></td><td></td><td class="void"></td></tr>
                  <tr><td class="ind"></td><td><svg class="i16"><use href="#water"/></svg></td><td><svg class="i16"><use href="#ball"/></svg></td><td>ХВС</td><td><svg class="i16"><use href="#cell"/></svg></td><td></td><td class="void"></td></tr>
                  </tbody>
                </table></div></td></tr>
              <tr><td class="ind"></td><td class="dk"><div class="pick d-flex align-items-center"><span class="pm plus"></span><input class="chk" type="checkbox" aria-label="Котельная №3"></div></td><td><svg class="i16"><use href="#sm-house"/></svg></td><td>Котельная №3</td><td></td><td></td><td></td><td><svg class="i16"><use href="#gas"/></svg></td><td></td><td class="text-end">1</td></tr>
              <tr class="alt"><td class="ind"></td><td class="dk"><div class="pick d-flex align-items-center"><span class="pm plus"></span><input class="chk" type="checkbox" aria-label="Котельная №4"></div></td><td><svg class="i16"><use href="#sm-house"/></svg></td><td>Котельная №4</td><td></td><td></td><td></td><td><svg class="i16"><use href="#gas"/></svg></td><td></td><td class="text-end">1</td></tr>
              <tr><td class="ind"></td><td class="dk"><div class="pick d-flex align-items-center"><span class="pm plus"></span><input class="chk" type="checkbox" aria-label="Котельная №5"></div></td><td><svg class="i16"><use href="#sm-house"/></svg></td><td>Котельная №5</td><td></td><td></td><td><svg class="i16"><use href="#stone"/></svg></td><td><svg class="i16"><use href="#gas"/></svg></td><td></td><td class="text-end">1</td></tr>
              <tr class="alt"><td class="ind"></td><td class="dk"><div class="pick d-flex align-items-center"><span class="pm plus"></span><input class="chk" type="checkbox" checked aria-label="МДК с. Октябрьский"></div></td><td><svg class="i16"><use href="#sm-house"/></svg></td><td>МДК с. Октябрьский</td><td></td><td></td><td></td><td></td><td></td><td class="text-end">1</td></tr>
            </tbody>
          </table>
        </div>
        <div class="doc-status d-flex align-items-center">Записей: 6, отобрано: 2<span class="vsep mx-2 my-1"></span>Котельная №2 - Природный газ</div>
      </main>
    </div>
  </section>
  <aside class="alerts">
    <div class="pane-title d-flex align-items-center">Центр уведомлений</div>
    <div class="alert-row d-flex align-items-center gap-2">
      <svg class="i16" viewBox="0 0 16 16"><path d="M8 1q6 0 6 5.500T9 12l0 3-3-3Q1 11 1 6t7-5z" fill="#f2f6fd" stroke="#b6c3e2"/><path d="M8 3v2M6.500 6H8v4M6.500 10h3" stroke="#1e5fc0" stroke-width="1.500" fill="none"/></svg>
      <p>Доступно обновление<br>версии 3.07 R12.06<br>от 15.04.2015<br>12:52:02.</p>
      <span>17.04.2015</span>
      <button class="ms-auto align-self-start mt-1 text-white" aria-label="Удалить уведомление"><svg width="14" height="14"><circle cx="7" cy="7" r="7"/><path d="M4.500 4.500l5 5M9.500 4.500l-5 5" stroke="#9fb2ea" stroke-width="1.500"/></svg></button>
    </div>
  </aside>
</div>

<div class="status ui d-flex align-items-center">
  <button class="d-flex align-items-center gap-1">Объекты учета<svg width="6" height="4"><path d="M0 0h6L3 4z"/></svg></button>
  <span class="vsep ms-auto me-2"></span>
  <svg class="i16 me-1" viewBox="0 0 16 16"><path d="M1 7q3-4 9-3l5 5-1 3-8 1z" fill="#555a56"/><path d="M3 7l6-1" stroke="#aaa"/><circle cx="11" cy="10" r="1" fill="#e22"/><circle cx="13" cy="10" r="1" fill="#2d2"/></svg>
  Служб опроса: 1; портов: 6, действует: 6, свободно: 6
  <span class="vsep mx-2"></span><span class="progress-slot"></span><span class="vsep mx-2"></span>
  Подключены к 'askue-server:10000' в 08:05 (17 апр)
</div>

<div class="stage">
<div class="dlg" role="dialog" aria-label="Редактирование точки учета">
  <div class="dlg-title d-flex align-items-center gap-1">
    <svg width="14" height="14"><use href="#house"/></svg><span class="flex-grow-1">Редактирование точки учета Котельная №2 - Природный газ</span>
    <button class="x-red big text-white" aria-label="Закрыть диалог"><svg width="10" height="10"><use href="#x"/></svg></button>
  </div>
  <div class="dlg-head">
    <div class="fw-bold">Автоопрос</div>
    <div class="dlg-note">Постановка и снятие с автоопроса. Задание параметров для автоматического опроса</div>
    <div class="dlg-link"><span><a href="#">Котельная №2</a> - Природный газ (летний режим)</span><svg class="i16"><use href="#gas"/></svg></div>
  </div>
  <div class="dlg-body">
    <nav class="tree" aria-label="Разделы">
      <button class="tree-head"><span class="fold"><svg width="10" height="10"><use href="#up"/></svg></span>Общие</button>
      <ul>
        <li><div class="nd"><svg class="i16"><use href="#tap"/></svg>Точка учета</div></li>
        <li><div class="nd"><svg class="i16"><use href="#sensor"/></svg>Датчики</div></li>
        <li><div class="nd"><svg class="i16"><use href="#warn"/></svg>Диагностика</div></li>
        <li><div class="nd tall"><svg class="i16"><use href="#ops"/></svg>Отображаемые параметры</div></li>
        <li><div class="nd tall text-nowrap"><svg class="i16"><use href="#calc"/></svg>Расчет и хранение</div></li>
        <li><div class="nd"><svg class="i16"><use href="#report"/></svg>Отчеты</div></li>
      </ul>
      <button class="tree-head"><span class="fold"><svg width="10" height="10"><use href="#up"/></svg></span>Опрос</button>
      <ul>
        <li><span class="pm box-pm"></span><div class="nd"><svg class="i16"><use href="#gauge"/></svg>Устройство</div>
          <ul>
            <li><div class="nd"><svg class="i16"><use href="#cell"/></svg>Сеть GSM</div></li>
            <li><div class="nd tall"><svg class="i16"><use href="#newcon"/></svg>Новое подключение</div></li>
          </ul></li>
        <li><div class="nd"><svg class="i16"><use href="#clock"/></svg><span class="cur">Автоопрос</span></div></li>
      </ul>
      <button class="tree-head tall"><span class="fold"><svg width="10" height="10"><use href="#up"/></svg></span>Энергоснабжающая организация</button>
      <ul><li><div class="nd"><svg class="i16"><use href="#contract"/></svg>Договор</div></li></ul>
    </nav>
    <div class="split"></div>
    <div class="work flex-grow-1">
      <div class="auto-row d-flex align-items-center ps-1"><svg width="24" height="24"><use href="#clock"/></svg><label class="fw-bold ms-2 me-1" for="auto">Опрашивать автоматически</label><input class="chk" type="checkbox" id="auto" checked></div>
      <section class="fs three"><h3>Основные параметры</h3>
        <div><label class="fw-bold w-key" for="con">Подключение:</label>
          <div class="combo flex-grow-1 me-1"><svg class="i16"><use href="#cell"/></svg><select id="con"><option>Сеть GSM, 89199171426</option></select><span class="dd"><svg width="10" height="10"><use href="#down"/></svg></span></div></div>
        <div><span class="fw-bold w-key">Загружаемые данные:</span>
          <label class="opt off w-o1"><input class="chk" type="checkbox" disabled>Месячный архив</label><label class="opt w-o2"><input class="chk" type="checkbox" checked>Суточный архив</label><label class="opt"><input class="chk" type="checkbox" checked>Часовой архив</label></div>
        <div><span class="w-key"></span><label class="opt w-o1"><input class="chk" type="checkbox">Текущие значения</label><label class="opt off w-o2"><input class="chk" type="checkbox" disabled>Профиль мощности</label><label class="opt"><input class="chk" type="checkbox">Архив событий</label></div>
      </section>
      <div class="mode-row d-flex align-items-center"><label class="opt w-long"><input class="chk rad" type="radio" name="mode" checked>Опрашивать по расписанию:</label><label class="opt off"><input class="chk rad" type="radio" name="mode" disabled>Опрашивать при подключении GPRS-устройства</label></div>
      <section class="fs plan"><h3>Расписание</h3>
        <div class="first"><label class="w-cap" for="per">Выполнять:</label><div class="combo w-per"><select id="per"><option>Ежедневно</option></select><span class="dd"><svg width="10" height="10"><use href="#down"/></svg></span></div>
          <label class="px-2" for="nday">каждый</label><div class="spin" style="width:52px"><input class="text-end" id="nday" value="1"><button aria-label="Изменить день"><svg width="10" height="12"><use href="#ud"/></svg></button></div><span class="ms-2">-й день</span></div>
        <div><label class="w-cap" for="from">в интервале с:</label><div class="spin" style="width:63px"><input id="from" value="00:10"><button aria-label="Изменить начало"><svg width="10" height="12"><use href="#ud"/></svg></button></div><label class="text-center" style="width:28px" for="to">по:</label><div class="spin w-m"><input id="to" value="23:59"><button aria-label="Изменить конец"><svg width="10" height="12"><use href="#ud"/></svg></button></div></div>
        <div class="last"><label class="opt w-rep"><input class="chk" type="checkbox" checked>с повтором каждые:</label><div class="spin w-m"><input value="01:00" aria-label="Повтор"><button aria-label="Изменить повтор"><svg width="10" height="12"><use href="#ud"/></svg></button></div><span class="ms-2">чч:мм</span></div>
      </section>
      <section class="fs three"><h3>Повтор при ошибках</h3>
        <div><label class="w-long" for="tries">Общее число попыток выполнения:</label><div class="spin w-s"><input class="text-end" id="tries" value="3"><button aria-label="Изменить число попыток"><svg width="10" height="12"><use href="#ud"/></svg></button></div><span class="ms-2">раз</span></div>
        <div><label class="w-long" for="pause">Пауза между попытками:</label><div class="spin w-s"><input id="pause" value="00:15"><button aria-label="Изменить паузу"><svg width="10" height="12"><use href="#ud"/></svg></button></div><span class="ms-2">чч:мм</span></div>
        <div><label class="dis w-long text-nowrap" for="maxs">Максимальное число сеансов в сутки:</label><div class="spin dis w-s"><input class="text-end" id="maxs" value="3" disabled><button disabled aria-label="Изменить число сеансов"><svg width="10" height="12"><use href="#ud"/></svg></button></div></div>
      </section>
    </div>
  </div>
  <div class="dlg-foot d-flex align-items-center justify-content-end">
    <button class="dbtn">&lt; Назад</button><button class="dbtn" style="margin-left:6px">Далее &gt;</button><button class="dbtn" style="margin-left:19px" disabled>Применить</button><button class="dbtn" style="margin-left:10px" disabled>Сохранить</button><button class="dbtn" style="margin-left:6px">Закрыть</button>
  </div>
</div>
</div>
</div>

<footer class="taskbar d-flex align-items-center">
  <button class="start" aria-label="Пуск"><svg width="38" height="38" viewBox="0 0 38 38"><circle cx="19" cy="19" r="17.500" fill="#2a6ca4" stroke="#a9cfe8"/><path d="M3 16a16 16 0 0 1 32 0q-16 6-32 0" fill="#ffffff48"/><path d="M10 12q4-3 8-1l-1 7q-4-2-8 1z" fill="#e8562a"/><path d="M20 11q4 2 8 0l-1 8q-4 1-8-1z" fill="#8cc63c"/><path d="M8 21q4-3 8-1l-1 7q-4-2-8 1z" fill="#3fa2e8"/><path d="M18 20q4 2 8 0l-1 8q-4 1-8-1z" fill="#fcc92c"/></svg></button>
  <button class="tb" aria-label="Paint"><svg width="32" height="34" viewBox="0 0 32 34"><path d="M2 20q0-11 13-12 12 0 12 9 0 5-6 5-4 0-3 4t-4 4Q2 29 2 20z" fill="#dbe9f5" stroke="#8facc8"/><circle cx="8" cy="17" r="2.200" fill="#d83a2c"/><circle cx="14" cy="13" r="2.200" fill="#7ac040"/><circle cx="21" cy="14" r="2.200" fill="#3a8fe0"/><circle cx="7" cy="23" r="2.200" fill="#4ca840"/><path d="M17 33l9-26 3 1-9 25z" fill="#e09038"/><path d="M25 7q0-5 6-6 1 5-3 8z" fill="#b8783c"/></svg></button>
  <button class="tb-rdp" aria-label="Удалённый рабочий стол"><svg width="32" height="34" viewBox="0 0 32 34"><path d="M3 1l22 2 2 17-21 2z" fill="#e6eaf0" stroke="#8795a8"/><path d="M5 3l18 2 2 13-18 2z" fill="#1836b8"/><path d="M15 4l8 1 2 12z" fill="#5f86ea"/><path d="M11 22h8l3 7H6z" fill="#c9d0da"/><circle cx="24" cy="26" r="7" fill="#dfe6e2" stroke="#7b8a86"/><path d="M20 23l3 3-3 3M28 22l-3 3 3 3" stroke="#2c9a3c" stroke-width="2" fill="none"/></svg></button>
  <button class="tb" aria-label="Outlook"><svg width="32" height="36" viewBox="0 0 32 36"><path d="M1 5l26-4q3 0 3 4v20L4 34q-3 0-3-4z" fill="#f4a81c" stroke="#c97c10"/><path d="M15 5h14v22H15z" fill="#fbe3a0"/><ellipse cx="10" cy="17" rx="6.500" ry="8.500" fill="none" stroke="#fff" stroke-width="4"/><circle cx="24" cy="15" r="6" fill="#fff6dc" stroke="#c9963a"/><path d="M24 11v4h3" stroke="#876" fill="none"/><path d="M17 23h14v11H17z" fill="#fbe9b0" stroke="#b98a34"/><path d="M17 23l7 6 7-6" fill="none" stroke="#b98a34"/></svg></button>
  <button class="tb ms-1" aria-label="Firefox"><svg width="32" height="34" viewBox="0 0 32 34"><circle cx="17" cy="15" r="14" fill="#2456a8"/><path d="M17 3q9 0 11 9l-7-1-4-5z" fill="#4da0e4"/><path d="M3 6q2 2 5 2 4-4 7-3-3 3-1 6 4 0 5 2-2 3-5 3 1 5 7 4 6-1 8-6 0-5-2-9 6 6 4 15-3 12-14 13Q3 33 1 21 0 12 3 6z" fill="#ea6a16"/><path d="M24 29q6-5 6-15 3 12-6 17z" fill="#fcc62c"/></svg></button>
  <button class="tb ms-1" aria-label="ЛЭРС УЧЕТ"><svg width="32" height="36" viewBox="0 0 32 36"><path d="M1 1h30v34H1z" fill="#fff" stroke="#30a8e0" stroke-width="2"/><path d="M1 20V1h30v19" fill="none" stroke="#e0252c" stroke-width="2"/><path d="M16 4l7 10-3 3-4-5-5 7-2-4z" fill="#5bbce6"/><path d="M16 33L8 22l4-3 4 5 4-5 4 1z" fill="#e0272b"/><path d="M16 15l3 3-3 4-3-4z" fill="#b41828"/></svg></button>
  <button class="tb ms-1" aria-label="Проводник"><svg width="34" height="34" viewBox="0 0 34 34"><path d="M2 6V3h9l2 3h8l2 2h9v18H2z" fill="#e9cc74" stroke="#b99636"/><path d="M2 10h30v18H2z" fill="#f8e6a4" stroke="#c9a850"/><path d="M5 3h4v3H5z" fill="#2cae3c"/><path d="M14 5h4v3h-4z" fill="#e0402c"/><path d="M22 7h4v3h-4z" fill="#3a88e0"/><path d="M6 33V22q0-3 3-3h16q3 0 3 3v11h-5v-7H11v7z" fill="#bfe2f5" stroke="#6aaed6"/></svg></button>
  <button class="tb ms-1" aria-label="Chrome"><svg width="30" height="30" viewBox="0 0 30 30"><circle cx="15" cy="15" r="14" fill="#fbd02c"/><path d="M15 15L2.900 8A14 14 0 0 1 27.500 9H15z" fill="#e13a2c"/><path d="M15 15l-1 14A14 14 0 0 1 2.900 8l6 10z" fill="#34a846"/><circle cx="15" cy="15" r="6.500" fill="#fff"/><circle cx="15" cy="15" r="5" fill="#3f80e4"/></svg></button>
  <div class="ms-auto d-flex align-items-center gap-2 h-100">
    <span class="me-2">RU</span>
    <svg width="8" height="5" class="me-1"><path d="M0 5h8L4 0z" fill="#fff"/></svg>
    <svg class="i16" viewBox="0 0 16 16"><circle cx="8" cy="8" r="7" fill="#2b7fd0" stroke="#fff" stroke-width="1.500"/><path d="M1 8h14M8 1v14M4 3q4 3 8 0M4 13q4-3 8 0" stroke="#fff" fill="none"/></svg>
    <svg class="i16" viewBox="0 0 16 16"><path d="M1 1h14v11H1z" fill="#111" stroke="#999"/><path d="M3 4l4 3v3M8 3l4 4v3" stroke="#58a8f0" stroke-width="2" fill="none"/><path d="M5 14h8" stroke="#ddd"/></svg>
    <svg class="i16" viewBox="0 0 16 16"><path d="M1 5h3l5-4v14l-5-4H1z" fill="#d8583c" stroke="#7c2414"/><path d="M11 4q3 4 0 8" stroke="#eee" fill="none"/></svg>
    <svg class="i16" viewBox="0 0 16 16"><path d="M1 1h14v14H1z" fill="#fff"/><path d="M2 2l4 0 0 5 6-5h3L8 8l6 5-1 2-7-5v3H2z" fill="#d8202c"/><path d="M8 15l7-5v5z" fill="#222"/></svg>
    <svg class="i16" viewBox="0 0 16 16"><path d="M0 0h16v16H0z" fill="#f8b420"/><ellipse cx="8" cy="8" rx="3.500" ry="5" fill="none" stroke="#fff" stroke-width="2.500"/></svg>
    <svg class="i16" viewBox="0 0 16 16"><path d="M3 1v14" stroke="#fff" stroke-width="2"/><path d="M4 2h5v2h6l-2 3 1 3H9V8H4z" fill="#fff"/></svg>
    <svg class="i16" viewBox="0 0 16 16" fill="none" stroke="#fff" stroke-width="1.300"><path d="M6 4h9v8H6zM2 1v4h2v8h2M1 5h5M8 15h7M11 12v3"/></svg>
    <svg class="i16" viewBox="0 0 16 16"><path d="M1 5h3l5-4v13l-5-4H1z" fill="#f3f3f3"/><circle cx="12" cy="12" r="4" fill="#e22c24"/><path d="M10.500 10.500l3 3M13.500 10.500l-3 3" stroke="#fff"/></svg>
    <div class="text-center ms-2">9:01<br>17.04.2015</div>
    <button class="show-desk h-100" aria-label="Свернуть все окна"></button>
  </div>
</footer>
</body>
</html>
